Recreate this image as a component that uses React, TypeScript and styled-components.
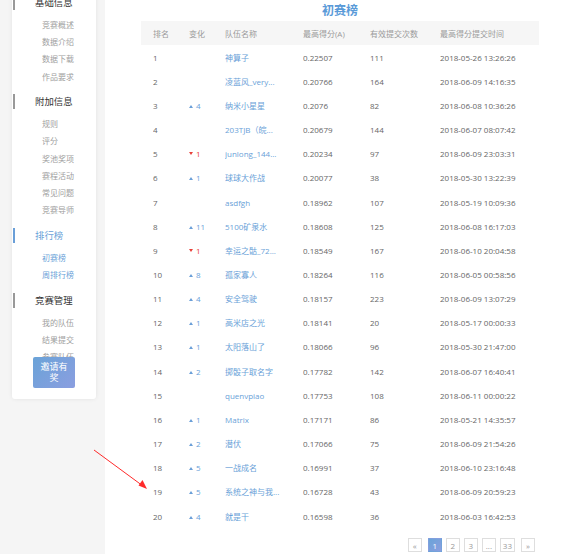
import React from 'react';
import styled, { createGlobalStyle } from 'styled-components';

const GlobalStyle = createGlobalStyle`
  html, body {
    margin: 0;
    padding: 0;
    background: #f5f5f5;
    font-family: 'Open Sans', 'Noto Sans CJK SC', sans-serif;
  }
  * {
    box-sizing: border-box;
  }
`;

const blue = '#6a9fd8';
const red = '#e8403a';

const Page = styled.div`
  display: flex;
  min-height: 554px;
  overflow: hidden;
  position: relative;
`;

const SideColumn = styled.div`
  width: 105px;
  flex: none;
  padding-left: 12px;
`;

const SideCard = styled.div`
  position: relative;
  width: 84px;
  margin-top: -19px;
  padding: 14px 0 24px;
  background: #fff;
  border-radius: 3px;
  box-shadow: 0 0 4px rgba(0, 0, 0, 0.08);
`;

const Section = styled.div`
  margin-bottom: 9.5px;
`;

const Heading = styled.div<{ $active?: boolean }>`
  position: relative;
  height: 16px;
  line-height: 16px;
  padding-left: 23px;
  margin-bottom: 5px;
  font-size: 9.4px;
  color: ${p => (p.$active ? blue : '#333')};
  &::before {
    content: '';
    position: absolute;
    left: 1px;
    top: 0;
    width: 2px;
    height: 15px;
    background: ${p => (p.$active ? blue : '#999')};
  }
`;

const Item = styled.div<{ $active?: boolean }>`
  height: 17.2px;
  line-height: 17.2px;
  padding-left: 30px;
  font-size: 8px;
  color: ${p => (p.$active ? blue : '#a0a0a0')};
`;

const InviteButton = styled.div`
  position: absolute;
  left: 21px;
  bottom: 11px;
  width: 42px;
  height: 31px;
  display: flex;
  align-items: center;
  justify-content: center;
  text-align: center;
  padding: 0 4px;
  border-radius: 2px;
  background: linear-gradient(135deg, #6aa3d8 0%, #8b9ee0 100%);
  color: #fff;
  font-size: 9px;
  line-height: 11px;
`;

const Main = styled.div`
  flex: 1;
  background: #fff;
  padding: 0 32px 0 36px;
`;

const Title = styled.div`
  height: 21px;
  line-height: 22px;
  text-align: center;
  font-size: 12px;
  font-weight: 700;
  color: #5a9ad8;
`;

const cols = '36px 36px 78px 67px 70px 1fr';

const HeaderRow = styled.div`
  display: grid;
  grid-template-columns: ${cols};
  align-items: center;
  height: 24px;
  padding-left: 12px;
  background: #f6f6f6;
  font-size: 8px;
  color: #9a9a9a;
`;

const Row = styled.div`
  display: grid;
  grid-template-columns: ${cols};
  align-items: center;
  height: 24.16px;
  padding-left: 12px;
  font-size: 8px;
  color: #666;
`;

const Cell = styled.div`
  white-space: nowrap;
  overflow: hidden;
`;

const TeamName = styled(Cell)`
  color: ${blue};
`;

const Change = styled.div<{ $up: boolean }>`
  display: flex;
  align-items: center;
  gap: 3px;
  color: ${p => (p.$up ? blue : red)};
`;

const Triangle = styled.span<{ $up: boolean }>`
  width: 0;
  height: 0;
  margin-top: ${p => (p.$up ? '2px' : '0')};
  border-left: 2px solid transparent;
  border-right: 2px solid transparent;
  ${p =>
    p.$up
      ? `border-bottom: 3.5px solid ${blue};`
      : `border-top: 3.5px solid ${red};`}
`;

const Pager = styled.div`
  display: flex;
  justify-content: flex-end;
  gap: 4px;
  margin: 10px 4px 0 0;
`;

const PageBox = styled.div<{ $active?: boolean; $edge?: 'left' | 'right' }>`
  min-width: 14px;
  height: 14px;
  padding: 0 2px;
  display: flex;
  align-items: center;
  justify-content: center;
  font-size: 8px;
  color: ${p => (p.$active ? '#fff' : '#999')};
  border: 1px solid ${p => (p.$active ? 'transparent' : '#dedede')};
  background: ${p =>
    p.$active ? 'linear-gradient(135deg, #6aa3d8, #8b9ee0)' : '#fff'};
  margin-right: ${p => (p.$edge === 'left' ? '2px' : '0')};
  margin-left: ${p => (p.$edge === 'right' ? '2px' : '0')};
`;

const Pointer = styled.svg`
  position: absolute;
  left: 0;
  top: 0;
  pointer-events: none;
`;

type Entry = [number, number, string, string, number, string];

// change: positive = up, negative = down, 0 = none
const rows: Entry[] = [
  [1, 0, '神算子', '0.22507', 111, '2018-05-26 13:26:26'],
  [2, 0, '凌蓝风_very...', '0.20766', 164, '2018-06-09 14:16:35'],
  [3, 4, '纳米小星星', '0.2076', 82, '2018-06-08 10:36:26'],
  [4, 0, '203TJB（皖...', '0.20679', 144, '2018-06-07 08:07:42'],
  [5, -1, 'junlong_144...', '0.20234', 97, '2018-06-09 23:03:31'],
  [6, 1, '球球大作战', '0.20077', 38, '2018-05-30 13:22:39'],
  [7, 0, 'asdfgh', '0.18962', 107, '2018-05-19 10:09:36'],
  [8, 11, '5100矿泉水', '0.18608', 125, '2018-06-08 16:17:03'],
  [9, -1, '幸运之骷_72...', '0.18549', 167, '2018-06-10 20:04:58'],
  [10, 8, '孤家寡人', '0.18264', 116, '2018-06-05 00:58:56'],
  [11, 4, '安全驾驶', '0.18157', 223, '2018-06-09 13:07:29'],
  [12, 1, '高米店之光', '0.18141', 20, '2018-05-17 00:00:33'],
  [13, 1, '太阳落山了', '0.18066', 96, '2018-05-30 21:47:00'],
  [14, 2, '掷骰子取名字', '0.17782', 142, '2018-06-07 16:40:41'],
  [15, 0, 'quenvpiao', '0.17753', 108, '2018-06-11 00:00:22'],
  [16, 1, 'Matrix', '0.17171', 86, '2018-05-21 14:35:57'],
  [17, 2, '潜伏', '0.17066', 75, '2018-06-09 21:54:26'],
  [18, 5, '一战成名', '0.16991', 37, '2018-06-10 23:16:48'],
  [19, 5, '系统之神与我...', '0.16728', 43, '2018-06-09 20:59:23'],
  [20, 4, '就是干', '0.16598', 36, '2018-06-03 16:42:53'],
];

const menu = [
  { title: '基础信息', items: ['竞赛概述', '数据介绍', '数据下载', '作品要求'] },
  {
    title: '附加信息',
    items: ['规则', '评分', '奖池奖项', '赛程活动', '常见问题', '竞赛导师'],
  },
  { title: '排行榜', items: ['初赛榜', '周排行榜'], active: true },
  { title: '竞赛管理', items: ['我的队伍', '结果提交', '参赛队伍'] },
];

export default function App() {
  return (
    <Page>
      <GlobalStyle />
      <SideColumn>
        <SideCard>
          {menu.map(sec => (
            <Section key={sec.title}>
              <Heading $active={sec.active}>{sec.title}</Heading>
              {sec.items.map(it => (
                <Item key={it} $active={sec.active}>
                  {it}
                </Item>
              ))}
            </Section>
          ))}
          <InviteButton>邀请有奖</InviteButton>
        </SideCard>
      </SideColumn>
      <Main>
        <Title>初赛榜</Title>
        <HeaderRow>
          <Cell>排名</Cell>
          <Cell>变化</Cell>
          <Cell>队伍名称</Cell>
          <Cell>最高得分(A)</Cell>
          <Cell>有效提交次数</Cell>
          <Cell>最高得分提交时间</Cell>
        </HeaderRow>
        {rows.map(([rank, change, team, score, count, time]) => (
          <Row key={rank}>
            <Cell>{rank}</Cell>
            <Cell>
              {change !== 0 && (
                <Change $up={change > 0}>
                  <Triangle $up={change > 0} />
                  {Math.abs(change)}
                </Change>
              )}
            </Cell>
            <TeamName>{team}</TeamName>
            <Cell>{score}</Cell>
            <Cell>{count}</Cell>
            <Cell>{time}</Cell>
          </Row>
        ))}
        <Pager>
          <PageBox $edge="left">«</PageBox>
          <PageBox $active>1</PageBox>
          <PageBox>2</PageBox>
          <PageBox>3</PageBox>
          <PageBox>...</PageBox>
          <PageBox>33</PageBox>
          <PageBox $edge="right">»</PageBox>
        </Pager>
      </Main>
      <Pointer width="571" height="554">
        <line x1="94" y1="450" x2="143" y2="486" stroke="#ff2a2a" strokeWidth="1" />
        <polygon points="147,489 138.5,485.5 142.5,480" fill="#ff2a2a" />
      </Pointer>
    </Page>
  );
}
